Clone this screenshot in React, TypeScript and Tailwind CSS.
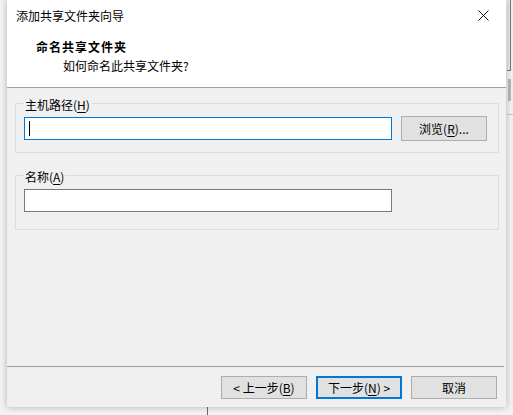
const font = { fontFamily: '"Microsoft YaHei UI", "Noto Sans CJK SC", "Noto Sans", sans-serif' };

const Key = ({ k }: { k: string }) => <span className="underline underline-offset-2">{k}</span>;

const Btn = ({ children, primary }: { children: React.ReactNode; primary?: boolean }) => (
  <button
    className={
      primary
        ? "flex h-[23px] w-[86px] items-center justify-center border-2 border-[#0078d7] bg-[#e1e1e1] text-[12px] leading-[16px] text-black"
        : "flex h-[23px] w-[86px] items-center justify-center border border-[#adadad] bg-[#e1e1e1] text-[12px] leading-[16px] text-black"
    }
  >
    {children}
  </button>
);

export default function App() {
  return (
    <div className="relative h-[415px] w-[513px] overflow-hidden bg-[#f3f3f3]" style={font}>
      {/* stuff behind the dialog */}
      <div className="absolute left-[208px] top-0 h-px w-px bg-[#707070]" />
      <div className="absolute left-[237px] top-0 h-px w-px bg-[#707070]" />
      <div className="absolute left-[207px] top-[405px] h-[10px] w-px bg-[#6a6a6a]" />
      <div className="absolute left-[507px] top-0 h-[71px] w-[4px] border-b border-r border-[#7a7a7a] bg-[#e8e8e8]" />
      <div className="absolute left-[508px] top-[79px] h-[22px] w-[3px] bg-[#b8b8b8]" />
      <div className="absolute left-[507px] top-[114px] h-px w-[6px] bg-[#c8c8c8]" />

      <div className="relative ml-[7px] flex h-[407px] w-[499px] flex-col bg-[#f0f0f0] text-black shadow-[0_0_7px_rgba(0,0,0,0.28)]">
        {/* title bar */}
        <div className="flex h-[31px] items-center justify-between bg-white pl-[9px] pr-[17px]">
          <span className="text-[12px] leading-[16px]">添加共享文件夹向导</span>
          <svg width="11" height="11" viewBox="0 0 11 11" className="mt-[-1px]">
            <path d="M0.5 0.5 L10.5 10.5 M10.5 0.5 L0.5 10.5" stroke="#111" strokeWidth="1" fill="none" />
          </svg>
        </div>

        {/* header */}
        <div className="h-[57px] border-b border-[#a0a0a0] bg-white pl-[29px] pt-[8px]">
          <div className="text-[12px] font-bold leading-[16px] tracking-[1px]">命名共享文件夹</div>
          <div className="mt-[3px] pl-[27px] text-[12px] leading-[16px]">如何命名此共享文件夹?</div>
        </div>

        {/* body */}
        <div className="flex flex-1 flex-col px-[8px]">
          <div className="mt-[15px] w-[484px] border border-[#dcdcdc] px-[8px] pb-[11px]">
            <div className="-mt-[7px] w-fit bg-[#f0f0f0] px-px text-[12px] leading-[16px]">
              主机路径(<Key k="H" />)
            </div>
            <div className="mt-[3px] flex items-center gap-[9px]">
              <div className="flex h-[23px] w-[368px] items-center border border-[#0078d7] bg-white pl-[4px]">
                <div className="h-[15px] w-px bg-black" />
              </div>
              <button className="flex h-[25px] w-[86px] items-center justify-center border border-[#adadad] bg-[#e1e1e1] text-[12px] leading-[16px]">
                浏览(<Key k="R" />)...
              </button>
            </div>
          </div>

          <div className="mt-[22px] w-[484px] border border-[#dcdcdc] px-[8px] pb-[17px]">
            <div className="-mt-[7px] w-fit bg-[#f0f0f0] px-px text-[12px] leading-[16px]">
              名称(<Key k="A" />)
            </div>
            <div className="mt-[4px] h-[23px] w-[368px] border border-[#7a7a7a] bg-white" />
          </div>
        </div>

        {/* footer */}
        <div className="w-[497px] border-t border-[#a0a0a0]" />
        <div className="flex justify-end gap-[9px] pb-[8px] pr-[9px] pt-[9px]">
          <Btn>
            &lt; 上一步(<Key k="B" />)
          </Btn>
          <Btn primary>
            下一步(<Key k="N" />) &gt;
          </Btn>
          <Btn>取消</Btn>
        </div>
      </div>
    </div>
  );
}
